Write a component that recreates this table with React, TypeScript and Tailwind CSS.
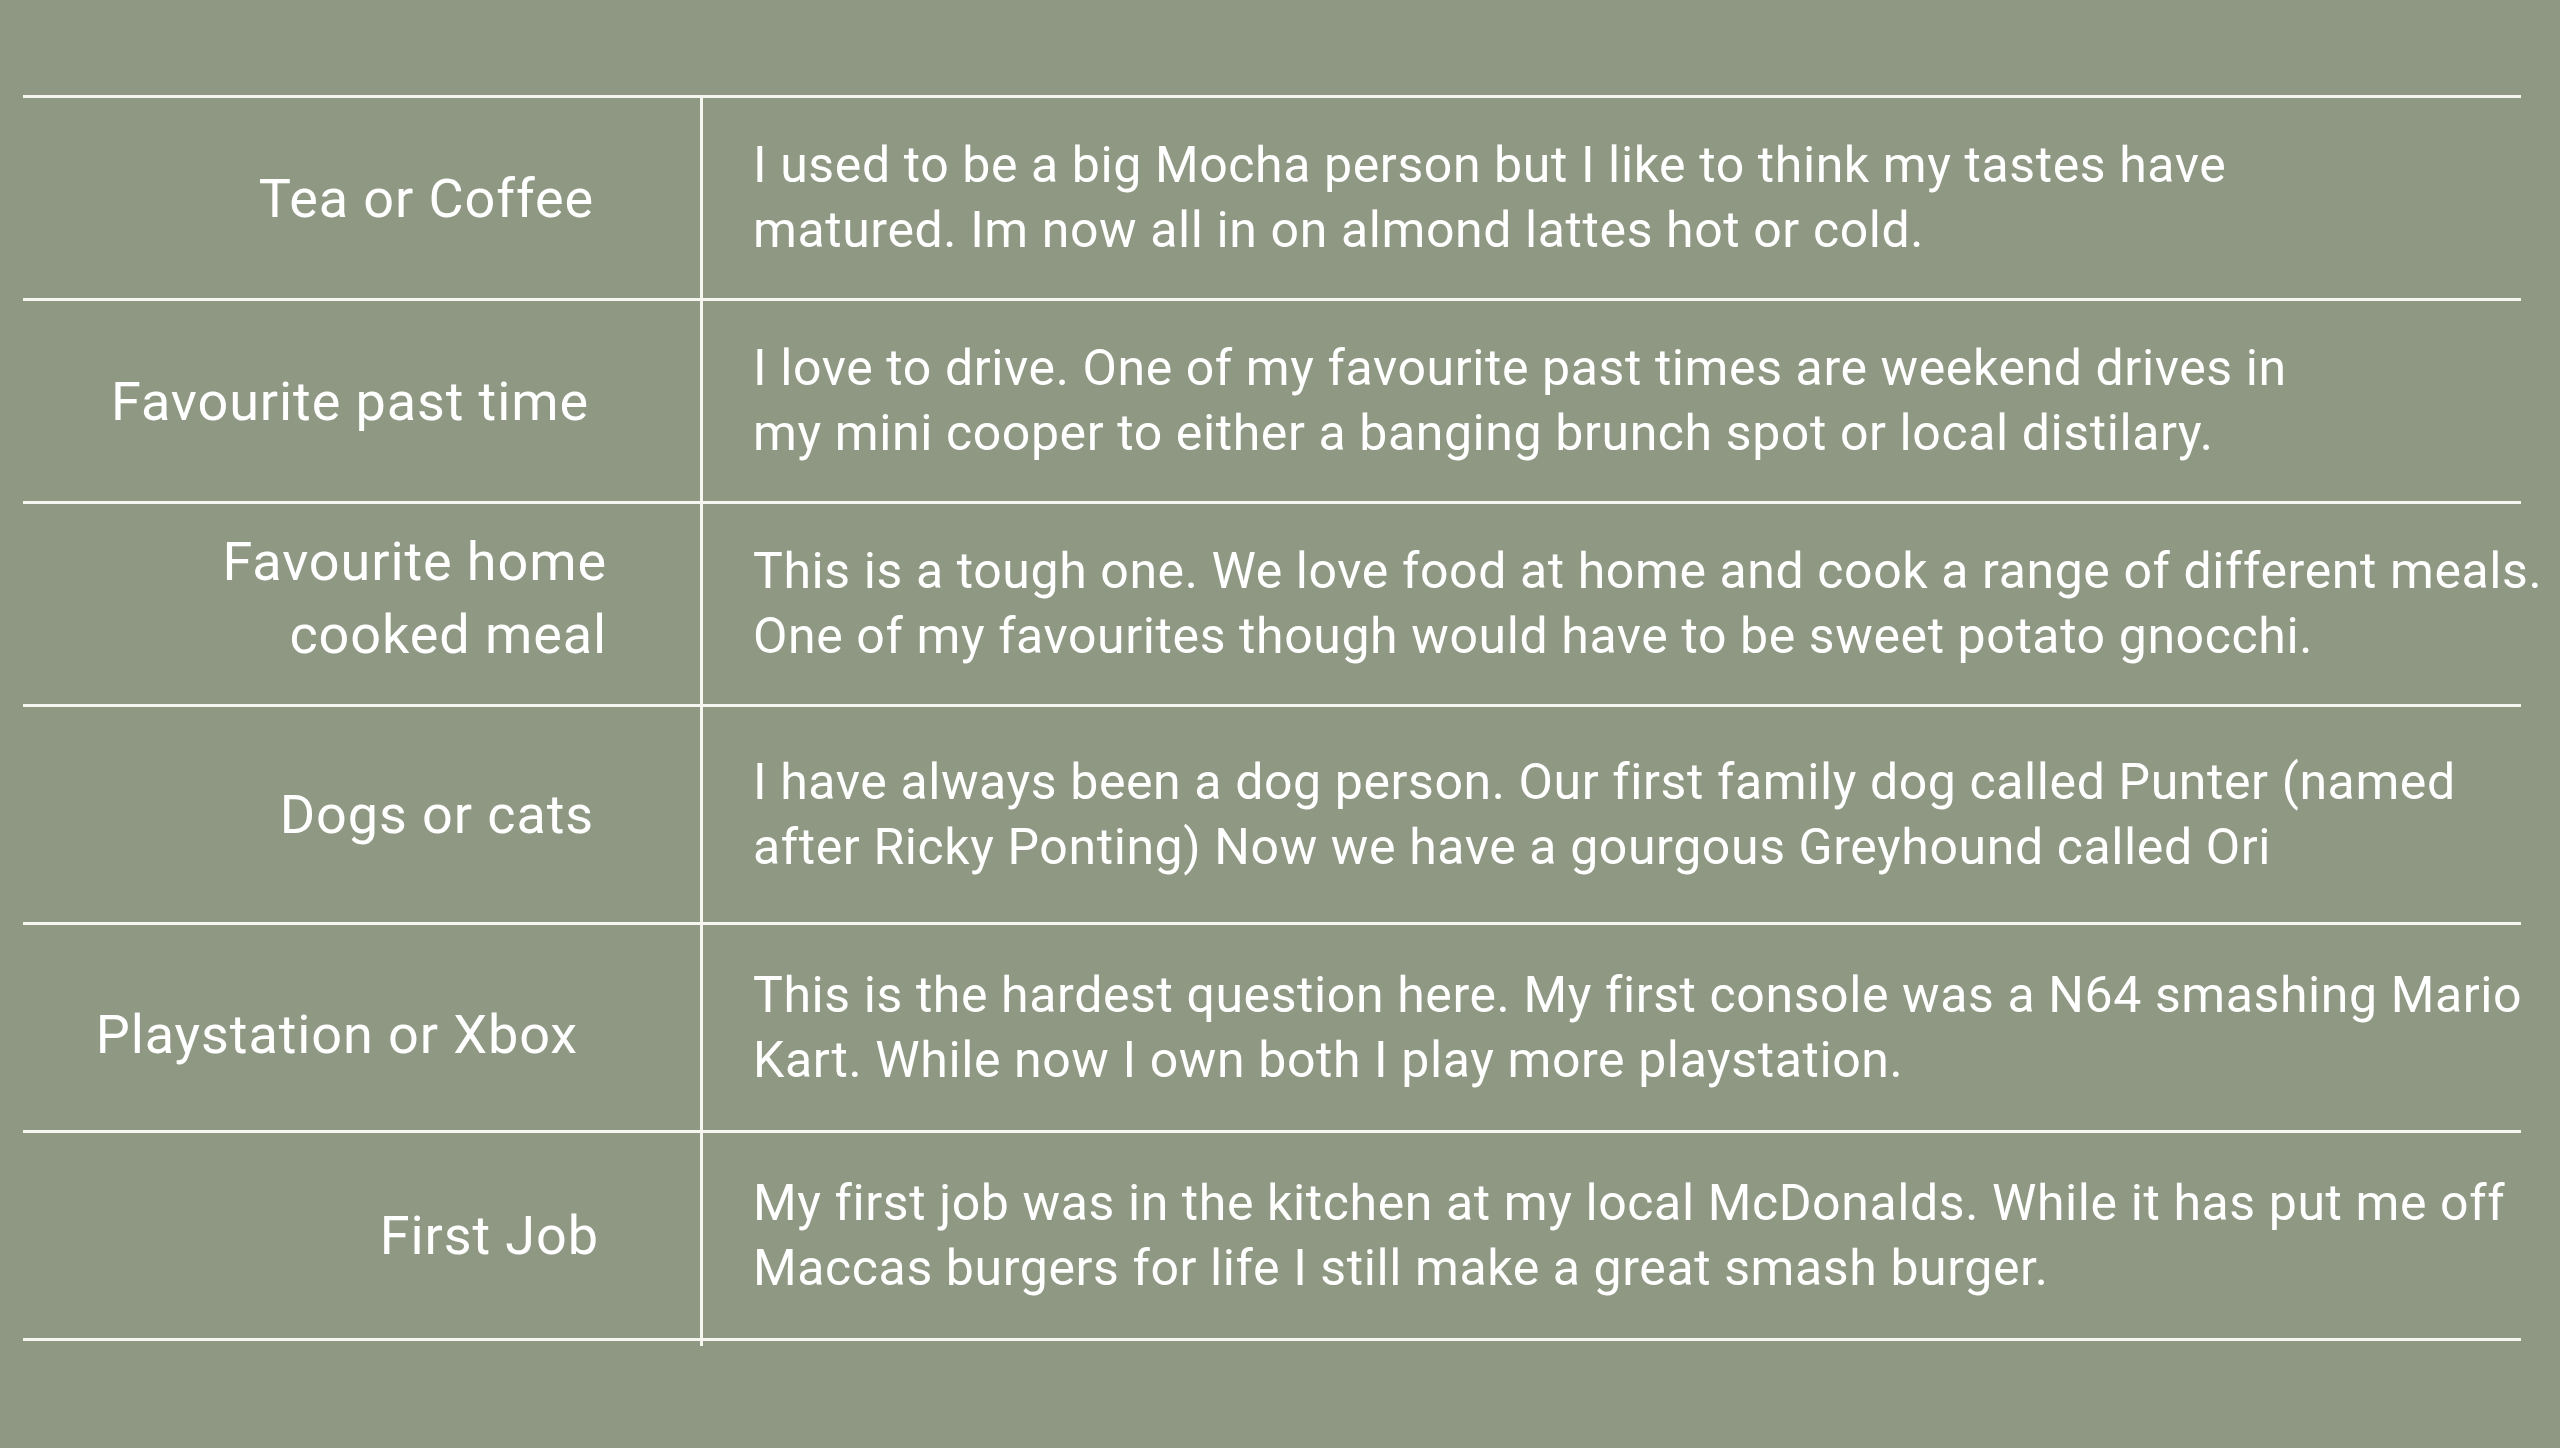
const rows = [
  {
    label: ["Tea or Coffee"],
    labelPad: "pr-[106px]",
    height: "h-[203px]",
    text: [
      "I used to be a big Mocha person but I like to think my tastes have",
      "matured. Im now all in on almond lattes hot or cold.",
    ],
  },
  {
    label: ["Favourite past time"],
    labelPad: "pr-[111px]",
    height: "h-[203px]",
    text: [
      "I love to drive. One of my favourite past times are weekend drives in",
      "my mini cooper to either a banging brunch spot or local distilary.",
    ],
  },
  {
    label: ["Favourite home", "cooked meal"],
    labelPad: "pr-[93px] pb-[12px]",
    height: "h-[203px]",
    text: [
      "This is a tough one. We love food at home and cook a range of different meals.",
      "One of my favourites though would have to be sweet potato gnocchi.",
    ],
  },
  {
    label: ["Dogs or cats"],
    labelPad: "pr-[106px]",
    height: "h-[218px]",
    text: [
      "I have always been a dog person. Our first family dog called Punter (named",
      "after Ricky Ponting) Now we have a gourgous Greyhound called Ori",
    ],
  },
  {
    label: ["Playstation or Xbox"],
    labelPad: "pr-[122px] pt-[14px]",
    height: "h-[208px]",
    text: [
      "This is the hardest question here. My first console was a N64 smashing Mario",
      "Kart. While now I own both I play more playstation.",
    ],
  },
  {
    label: ["First Job"],
    labelPad: "pr-[101px]",
    height: "h-[208px]",
    text: [
      "My first job was in the kitchen at my local McDonalds. While it has put me off",
      "Maccas burgers for life I still make a great smash burger.",
    ],
  },
];

export default function App() {
  return (
    <div className="min-h-[1448px] w-full bg-[#8f9883] pl-[23px] pr-[39px] pt-[95px] text-white [font-family:Roboto,'Noto_Sans',sans-serif]">
      <div className="border-t-[3px] border-[#f6f6f1]">
        {rows.map((row) => (
          <div key={row.label.join(" ")} className={`flex border-b-[3px] border-[#f6f6f1] ${row.height}`}>
            <div
              className={`flex w-[680px] shrink-0 flex-col items-end justify-center border-r-[3px] border-[#f6f6f1] text-right text-[54px] leading-[73px] tracking-[0.9px] ${row.labelPad}`}
            >
              {row.label.map((line) => (
                <div key={line}>{line}</div>
              ))}
            </div>
            <div className="flex flex-1 flex-col justify-center whitespace-nowrap pl-[50px] text-[50px] leading-[65px] tracking-[0.6px]">
              {row.text.map((line) => (
                <div key={line}>{line}</div>
              ))}
            </div>
          </div>
        ))}
      </div>
      <div className="ml-[677px] h-[5px] w-[3px] bg-[#f6f6f1]" />
    </div>
  );
}
